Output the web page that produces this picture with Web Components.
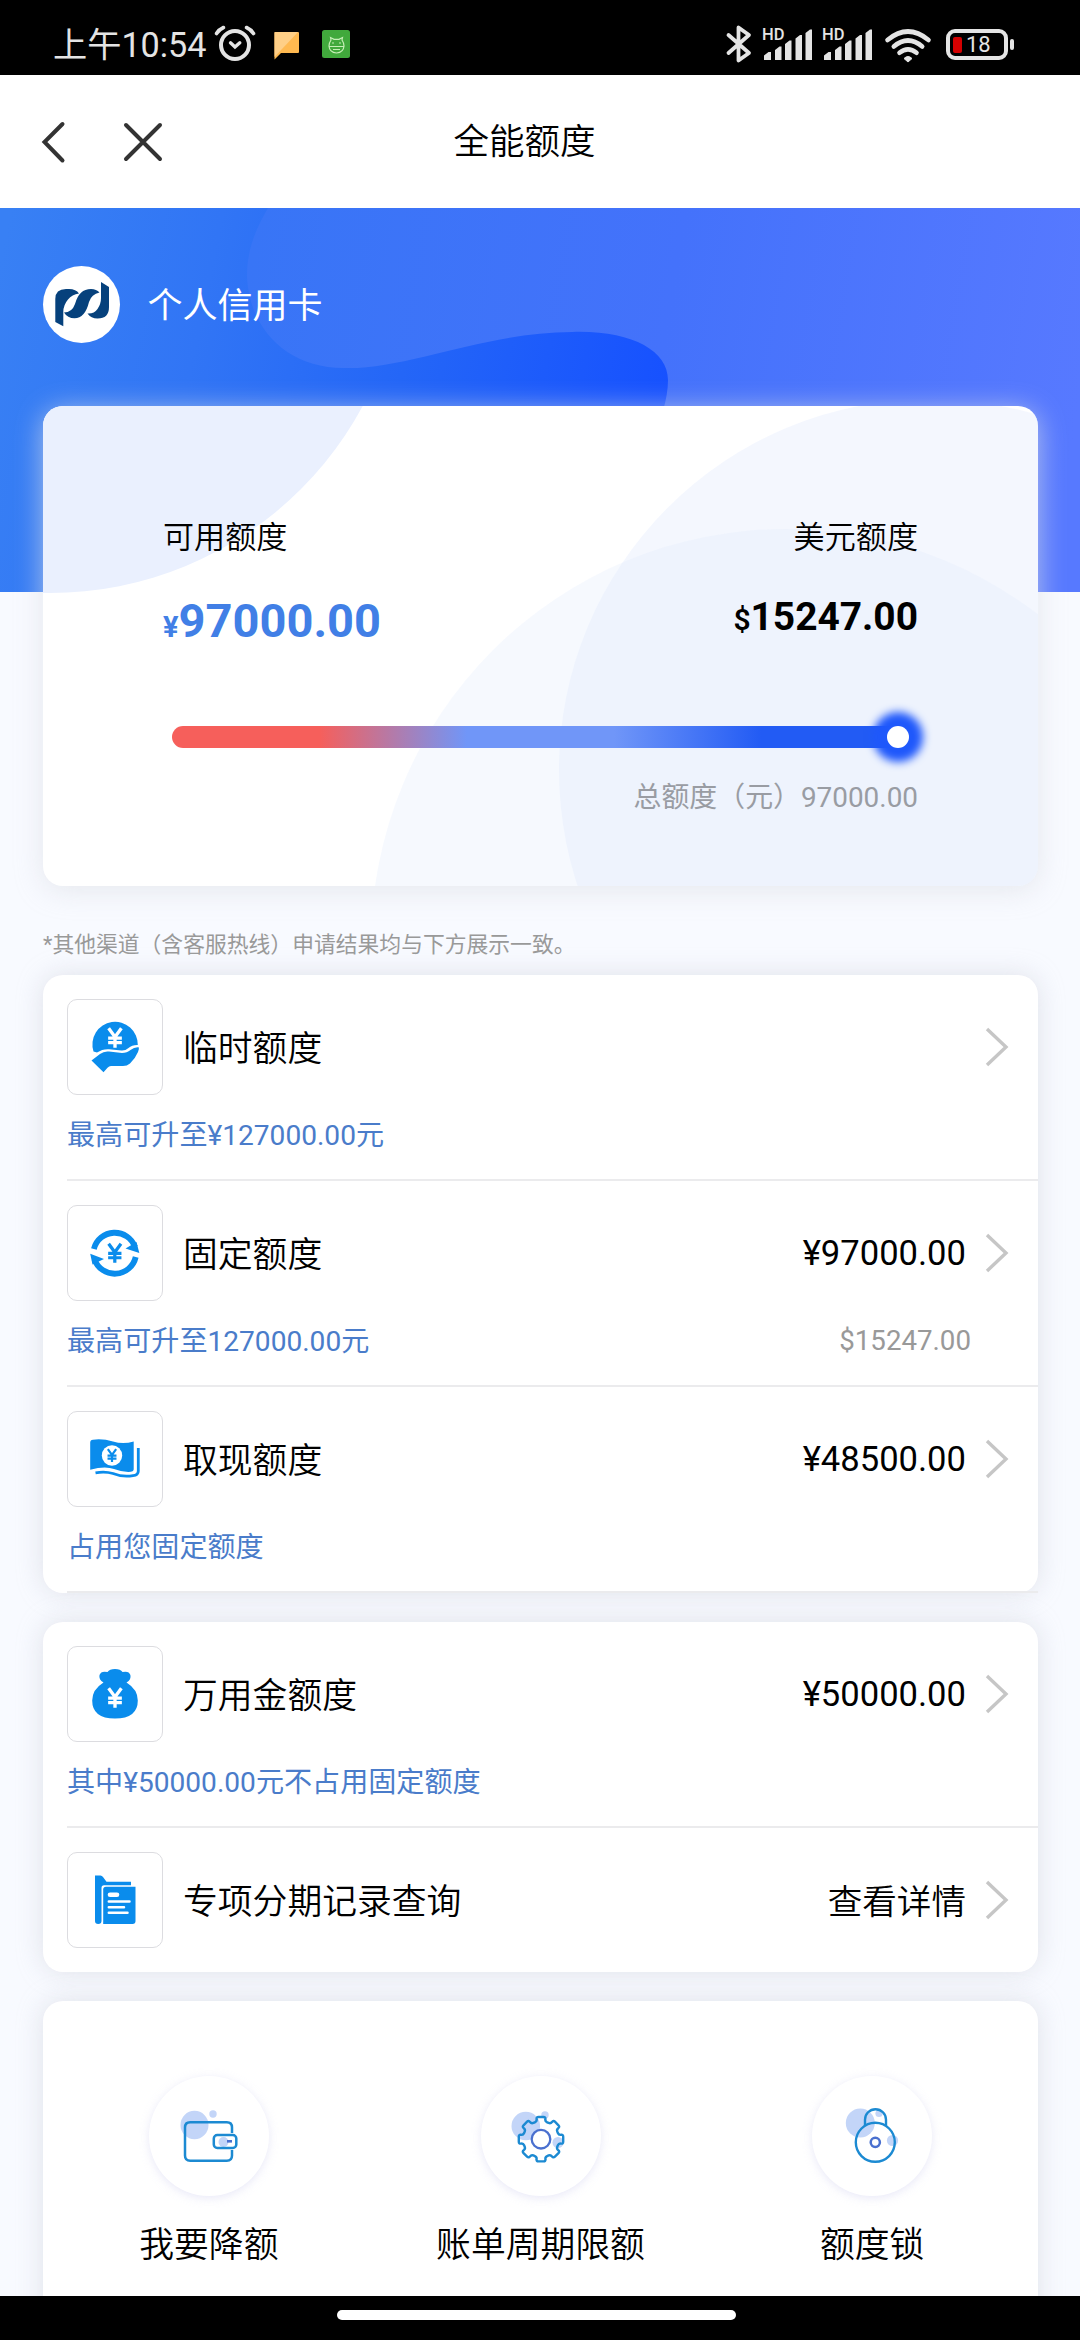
<!DOCTYPE html>
<html lang="zh-CN">
<head>
<meta charset="utf-8">
<title>全能额度</title>
<style>
  html, body { margin: 0; padding: 0; }
  body {
    width: 1080px; height: 2340px; overflow: hidden; background: #f8faff; color: #000;
    font-family: Roboto, "Noto Sans CJK SC", sans-serif; font-size: 34.8px; font-weight: 400;
  }
</style>
</head>
<body>
<app-screen></app-screen>
<script>
const define = (name, html, setup) => {
  const tpl = document.createElement('template');
  tpl.innerHTML = html;
  customElements.define(name, class extends HTMLElement {
    constructor() {
      super();
      this.attachShadow({ mode: 'open' }).appendChild(tpl.content.cloneNode(true));
    }
    connectedCallback() { if (setup) setup(this, this.shadowRoot); }
  });
};

/* Yen mark used inside the row icons, centred on x,y */
const yen = (x, y, s, color) =>
  `<g transform="translate(${x} ${y}) scale(${s})" fill="none" stroke="${color}" stroke-width="3.4">
    <path d="M-6.5-10 0-1 6.5-10M0-1V10M-7 .2H7M-7 4.8H7"/></g>`;

/* Outline of an eight-toothed gear with rounded corners */
const gearPath = (cx, cy, ro, ri) => {
  const pts = [];
  for (let i = 0; i < 8; i++) {
    const a = i * 45 - 90;
    [[-13, ri], [-12, ro], [12, ro], [13, ri]].forEach(([d, r]) => {
      const t = (a + d) * Math.PI / 180;
      pts.push([cx + r * Math.cos(t), cy + r * Math.sin(t)]);
    });
  }
  const towards = (p, q, k) => {
    const l = Math.hypot(q[0] - p[0], q[1] - p[1]);
    return [p[0] + (q[0] - p[0]) * k / l, p[1] + (q[1] - p[1]) * k / l];
  };
  let d = '';
  pts.forEach((p, i) => {
    const a = towards(p, pts[(i + 31) % 32], 2.2), b = towards(p, pts[(i + 1) % 32], 2.2);
    d += `${i ? 'L' : 'M'}${a.map(n => n.toFixed(2))}Q${p.map(n => n.toFixed(2))} ${b.map(n => n.toFixed(2))}`;
  });
  return d + 'Z';
};

const B = '#0a8cec', L = '#1c8ad2', P = '#4a70cf', S = '#c3d5f8';
const icons = {
  hand: [96, 96, `<path d="M26.500 52.500A22.700 22.700 0 1 1 70.800 46Q65 45.800 61.500 49Q58.500 51.800 54.500 51.600L42 50.200Q35.500 49.800 30 53.500Z" fill="${B}"/>
    <path d="M24.500 61.500 33 55Q37 52 42 52.600L55 54Q60 54 63.500 51Q67.500 47.700 71.700 48.200Q72.500 50 71 53Q68 60 63 64.500Q60 67 56 67H44Q42 67 40.500 68.800L36.500 73.300Z" fill="${B}"/>
    ${yen(48, 39, .98, '#fff')}`],
  cycle: [96, 96, `<g fill="none" stroke="${B}" stroke-width="5.800">
      <path d="M26.900 44A21.500 21.500 0 0 1 68 42"/><path d="M68.700 52A21.500 21.500 0 0 1 27.500 54.500"/></g>
    <path d="M69.500 37 72.300 48 58.500 43.500ZM25.500 59.500 23.200 48.800 37 54Z" fill="${B}"/>${yen(47.8, 48.2, .95, B)}`],
  cash: [96, 96, `<path d="M23.200 31.500Q23.200 29 26 28.700Q36 27.500 46 30.500T66.700 30.500V58.500Q66.700 60.500 64 60.800Q56 61.500 47 58T23.200 58.800Z" fill="${B}"/>
    <circle cx="45" cy="44.500" r="10.200" fill="#fff"/>${yen(45, 44.5, .64, B)}
    <path d="M71.300 37V60Q71.300 64.300 66 64.600Q56 66.500 46 62.500Q38 60 28.500 61.800" fill="none" stroke="${B}" stroke-width="2.800"/>`],
  bag: [96, 96, `<path d="M36.500 36.500Q31.500 33.500 32.500 29Q34 24.500 40.500 26Q42.500 23 48 23Q53.500 23 55.500 26Q62 24.500 63.400 29Q64.500 33.500 59.500 36.500Q70.800 43.500 70.800 54.500Q70.800 72.500 48 72.500Q25.200 72.500 25.200 54.500Q25.200 43.500 36.500 36.500Z" fill="${B}"/>${yen(48, 52, .98, '#fff')}`],
  doc: [96, 96, `<path d="M28 23.500H33.500Q35 23.500 36 25L39.500 29.800H64V33.300H37Q34.500 33.300 34.500 36V69Q34.500 72 31.200 72Q28 72 28 69Z" fill="${B}"/>
    <path d="M39 34.800H68.500V69Q68.500 72 65.500 72H36.200V37.500Q36.200 34.800 39 34.800Z" fill="${B}"/>
    <path d="M43 42.700H50" stroke="#fff" stroke-width="4.600" stroke-linecap="round"/>
    <path d="M41.800 49.500H62.500M41.800 55.200H57M41.800 60.800H60.500" stroke="#fff" stroke-width="2.500" stroke-linecap="round"/>`],
  wallet: [120, 120, `<ellipse cx="45.500" cy="49" rx="14" ry="14.300" fill="${S}"/><circle cx="64" cy="38" r="3.700" fill="${S}"/><circle cx="74.500" cy="66" r="5" fill="${S}"/>
    <g fill="none" stroke="${L}" stroke-width="2.500"><path d="M83 57V51.500Q83 46.300 77.800 46.300H41.200Q36 46.300 36 51.500V79.500Q36 84.700 41.200 84.700H77.800Q83 84.700 83 79.500V74"/><rect x="64.800" y="59" width="22.500" height="13" rx="3.500"/></g>
    <path d="M78 65.300H83" stroke="${P}" stroke-width="2.600"/>`],
  gear: [120, 120, `<circle cx="44.800" cy="50" r="14.300" fill="${S}"/><circle cx="64" cy="39" r="3.700" fill="${S}"/><circle cx="77" cy="66.500" r="5.500" fill="${S}"/>
    <path d="${gearPath(60, 63.2, 22.7, 18.2)}" fill="none" stroke="${L}" stroke-width="2.400"/>
    <circle cx="60" cy="63.200" r="9.300" fill="#fff" stroke="${P}" stroke-width="2.300"/>`],
  lock: [120, 120, `<circle cx="48.300" cy="47" r="14.500" fill="${S}"/><circle cx="80.500" cy="64.500" r="5.600" fill="${S}"/><circle cx="67" cy="37.500" r="3.600" fill="${S}"/>
    <g fill="none" stroke="${L}" stroke-width="2.400"><circle cx="63.300" cy="66.300" r="19.500"/><path d="M53 49.500V43.700A10.500 10.500 0 0 1 74 43.700V49.500"/></g>
    <circle cx="63.300" cy="66.300" r="4.600" fill="#fff" stroke="${P}" stroke-width="2.500"/>`],
  alarm: [42, 38, `<g fill="none" stroke="#e4e4e4" stroke-linecap="round"><circle cx="21" cy="20" r="14" stroke-width="4"/><path d="M2.500 8.500Q5 4.500 9.500 2.500M39.500 8.500Q37 4.500 32.500 2.500" stroke-width="3.600"/><path d="M16.500 17.800 21 22 25.800 17.800" stroke-width="3.400"/></g>`],
  bubble: [26, 28, `<path d="M1 0H24Q25 0 25 1V20Q25 21 24 21H7L.5 27.500V1Q.5 0 1 0Z" fill="#ffb950"/><path d="M1 0H24L.5 25V1Q.5 0 1 0Z" fill="#ffcf86"/>`],
  robot: [28, 28, `<rect width="28" height="28" rx="2.500" fill="#41a93c"/><g fill="none" stroke="#c6eeb6" stroke-width="1.200"><path d="M8.500 7.500 9 10Q7 13 7 16Q7.500 22.500 14.500 23Q21.500 22.500 22 16Q22 13 20 10L20.500 7.500 17 9.300H12ZM7 16.500H22"/><path d="M10 13H12M17 13H19M11 19.500H18"/></g>`],
  bluetooth: [26, 38, `<path d="M2.500 10 23 28 12.500 35.500V2.500L23 10 2.500 28" fill="none" stroke="#e4e4e4" stroke-width="3.800" stroke-linejoin="round" stroke-linecap="round"/>`],
  bars: [50, 32, `<g fill="#e4e4e4"><path d="M0 31V26.500L4.500 23H7V31ZM11 31V21L15.500 17.500H17.500V31ZM21 31V15L25.500 11.500H27.500V31ZM31.500 31V9.500L36 6H38V31ZM41.500 31V4L46 .5H48V31Z"/></g>`],
  wifi: [48, 36, `<g fill="none" stroke="#e4e4e4" stroke-width="4.600" stroke-linecap="round"><path d="M3.500 13Q24-4 44.500 13"/><path d="M9.800 19.500Q24 7.500 38.200 19.500"/><path d="M15.500 25.800Q24 19 32.500 25.800"/></g><path d="M20 31.500Q24 27.500 28 31.500L24 35Z" fill="#e4e4e4" stroke="#e4e4e4" stroke-width="1" stroke-linejoin="round"/>`],
  back: [24, 42, `<path d="M20.500 3 2.500 21 20.500 39.500" fill="none" stroke="#333" stroke-width="4" stroke-linecap="round"/>`],
  close: [40, 40, `<path d="M3 3 37 37M37 3 3 37" stroke="#333" stroke-width="4" stroke-linecap="round"/>`],
  chevron: [24, 40, `<path d="M2 2 21 20 2 38" fill="none" stroke="#c6c6c6" stroke-width="3.400"/>`],
  logo: [77, 77, `<g fill="#06417c"><path d="M12.300 56V33Q12.300 23 23 23H26Q33 23 36 27.500Q29 28.500 25 33.500Q20.300 39 20.300 46V60.200Z"/><path d="M21 46.500Q29 46.500 32 38Q36 23 48 23Q53.500 23 56.500 26.500Q48.500 28 46 36Q42 52.300 31.500 52.300Q24.500 52.300 21 46.500Z"/><path d="M58 16 66 21V41Q66 52.500 54.500 52.500Q48 52.500 44.500 47.500Q51 48 54.500 43Q58 38 58 32Z"/></g>`],
};

define('ui-icon', `<style>:host{display:block;flex:none}svg{display:block;overflow:visible}</style>`, (el, root) => {
  if (root.querySelector('svg')) return;
  const [w, h, body] = icons[el.getAttribute('name')];
  root.innerHTML += `<svg width="${w}" height="${h}" viewBox="0 0 ${w} ${h}">${body}</svg>`;
});

define('status-bar', `
<style>
  :host{display:flex;justify-content:space-between;box-sizing:border-box;height:75px;background:#000;color:#e4e4e4;padding:0 66px 0 53px}
  .side{display:flex;align-items:flex-start}
  .time{font-size:34.2px;line-height:40px;margin-top:25px;width:161px;white-space:nowrap}
  .sig{display:grid;width:60px;margin-top:29px}
  .sig>*{grid-area:1/1}
  .hd{font-size:16.5px;font-weight:500;line-height:16px;margin:-2px 0 0 -2px}
  .bat{display:grid;box-sizing:border-box;width:62px;height:31px;border:4px solid #e4e4e4;border-radius:9px;margin-top:29px;
    grid-template-columns:auto 1fr;align-items:center}
  .bat i{width:9px;height:16px;border-radius:2px;background:#d40000;margin-left:3px}
  .bat span{font-size:22px;font-weight:400;line-height:22px;margin-left:4px}
  .nub{width:4px;height:11px;border-radius:2px;background:#e4e4e4;margin:39px 0 0 2px}
</style>
<div class="side"><span class="time">上午10:54</span>
  <ui-icon name="alarm" style="margin-top:25px"></ui-icon>
  <ui-icon name="bubble" style="margin:32px 0 0 18px"></ui-icon>
  <ui-icon name="robot" style="margin:30px 0 0 22px"></ui-icon></div>
<div class="side">
  <ui-icon name="bluetooth" style="margin:25px 12px 0 0"></ui-icon>
  <div class="sig"><ui-icon name="bars"></ui-icon><span class="hd">HD</span></div>
  <div class="sig"><ui-icon name="bars"></ui-icon><span class="hd">HD</span></div>
  <ui-icon name="wifi" style="margin:27px 14px 0 0"></ui-icon>
  <div class="bat"><i></i><span>18</span></div><div class="nub"></div>
</div>`);

define('nav-bar', `
<style>
  :host{display:grid;grid-template-columns:453.5px 1fr;align-items:center;height:133px;background:#fff}
  .btns{display:flex;align-items:center;gap:57px;padding-left:42px}
  .title{font-size:35.5px;font-weight:350;line-height:50px;padding-top:1px}
</style>
<div class="btns"><ui-icon name="back"></ui-icon><ui-icon name="close"></ui-icon></div>
<div class="title"><slot></slot></div>`);

define('quota-meter', `
<style>
  :host{display:flex;justify-content:flex-end;align-items:center;box-sizing:border-box;width:737px;height:22px;border-radius:11px;
    background:linear-gradient(90deg,#f65f5b 20%,#7096f8 40%,#7096f8 60%,#225bf4 80%)}
  .knob{width:22px;height:22px;border-radius:50%;background:#fff;box-shadow:0 0 8px 14px #1f58fb}
</style><div class="knob"></div>`);

define('quota-card', `
<style>
  :host{display:grid;width:995px;height:480px;border-radius:20px;background:#fff;box-shadow:0 4px 28px rgba(222,224,230,.72)}
  svg{grid-area:1/1;border-radius:20px;display:block}
  .body{grid-area:1/1;box-sizing:border-box;padding:110px 120px 0 120px;display:flex;flex-direction:column}
  .pair{display:flex;justify-content:space-between}
  .label{font-size:31.1px;font-weight:350;line-height:44px;margin-bottom:25px}
  .r{text-align:right}
  .num{font-weight:700;line-height:56px}
  .cny{font-size:47px;color:#417fe6;padding-top:8px}
  .cny small{font-size:29px}
  .usd{font-size:38.9px;padding-top:4px}
  .usd small{font-size:30px;font-weight:600}
  quota-meter{margin:71px 0 0 9px}
  .total{font-size:27.9px;line-height:40px;color:#999ca3;text-align:right;margin-top:30px}
</style>
<svg width="995" height="480" viewBox="43 406 995 480">
  <circle cx="50" cy="238" r="355" fill="#eaf0fe"/>
  <circle cx="930" cy="770" r="371" fill="#e2ebfc" fill-opacity=".38"/>
  <circle cx="786" cy="944" r="415" fill="#e2eafc" fill-opacity=".3"/>
</svg>
<div class="body">
  <div class="pair">
    <div><div class="label">可用额度</div><div class="num cny"><small>¥</small>97000.00</div></div>
    <div class="r"><div class="label">美元额度</div><div class="num usd"><small>$</small>15247.00</div></div>
  </div>
  <quota-meter></quota-meter>
  <div class="total">总额度（元）97000.00</div>
</div>`);

define('hero-panel', `
<style>
  :host{display:grid;height:678px}
  svg{grid-area:1/1;display:block}
  .body{grid-area:1/1;display:flex;flex-direction:column;padding:58px 0 0 43px}
  .who{display:flex;align-items:center;height:77px;margin-bottom:63px}
  .disc{width:77px;height:77px;border-radius:50%;background:#fff}
  .name{color:#fff;font-size:35px;line-height:50px;margin:5px 0 0 27.5px}
</style>
<svg width="1080" height="384" viewBox="0 208 1080 384">
  <defs>
    <linearGradient id="a" gradientUnits="userSpaceOnUse" x1="0" y1="260" x2="680" y2="400"><stop offset="0" stop-color="#3880f4"/><stop offset=".3" stop-color="#3175f5"/><stop offset=".6" stop-color="#2466f7"/><stop offset="1" stop-color="#1650ff"/></linearGradient>
    <linearGradient id="b" gradientUnits="userSpaceOnUse" x1="250" y1="260" x2="1080" y2="400"><stop offset="0" stop-color="#3875f6"/><stop offset=".5" stop-color="#4472fb"/><stop offset="1" stop-color="#5779ff"/></linearGradient>
  </defs>
  <rect y="208" width="1080" height="384" fill="url(#a)"/>
  <path d="M268 208C254 232 247 252 247 276C249 328 286 368 344 368C406 370 486 332 572 332C630 330 668 350 668 380C668 440 600 500 640 592H1080V208Z" fill="url(#b)"/>
</svg>
<div class="body">
  <div class="who"><div class="disc"><ui-icon name="logo"></ui-icon></div><div class="name">个人信用卡</div></div>
  <quota-card></quota-card>
</div>`);

define('panel-card', `
<style>
  :host{display:block;width:995px;border-radius:20px;background:#fff;box-shadow:0 0 26px rgba(215,218,226,.75)}
</style><slot></slot>`);

define('limit-row', `
<style>
  :host{display:block;box-sizing:border-box;margin-left:24px;padding-top:24px;height:206px;border-bottom:2px solid #ebebed}
  :host([plain]){height:144px;border:0}
  .main{display:flex;align-items:center;height:96px}
  .box{box-sizing:border-box;width:96px;height:96px;border:1.500px solid #dcdce0;border-radius:10px;margin-right:20px}
  .box ui-icon{margin:-1px}
  .name{flex:1;font-weight:350;line-height:50px;padding-top:4px}
  .val{font-size:34.6px;line-height:50px;margin-right:19px}
  .val.cn{font-weight:350;padding-top:4px}
  ui-icon.chev{margin-right:29px}
  .sub{display:flex;justify-content:space-between;font-size:28.1px;line-height:40px;margin-top:21px;padding-right:67px;color:#4a7cca}
  .sub .usd{color:#999;font-size:27.7px;margin-top:-1px}
</style>
<div class="main"><div class="box"></div><div class="name"></div><div class="val"></div><ui-icon class="chev" name="chevron"></ui-icon></div>
<div class="sub"><span class="tip"></span><span class="usd"></span></div>`, (el, root) => {
  const g = n => el.getAttribute(n) || '';
  root.querySelector('.box').innerHTML = `<ui-icon name="${g('icon')}"></ui-icon>`;
  root.querySelector('.name').textContent = g('name');
  const val = root.querySelector('.val');
  val.textContent = g('value');
  if (el.hasAttribute('plain')) val.classList.add('cn');
  root.querySelector('.tip').textContent = g('tip');
  root.querySelector('.usd').textContent = g('usd');
});

define('quick-action', `
<style>
  :host{display:flex;flex-direction:column;align-items:center;flex:1}
  .disc{width:120px;height:120px;border-radius:50%;background:#fff;box-shadow:0 2px 10px rgba(200,200,235,.42)}
  .label{font-weight:350;line-height:50px;margin-top:24px}
</style>
<div class="disc"></div><div class="label"><slot></slot></div>`, (el, root) => {
  root.querySelector('.disc').innerHTML = `<ui-icon name="${el.getAttribute('icon')}"></ui-icon>`;
});

define('app-screen', `
<style>
  :host{display:flex;flex-direction:column;width:1080px;height:2340px;overflow:hidden}
  main{flex:1;min-height:0;overflow:hidden;display:flex;flex-direction:column}
  main>*{flex:none}
  panel-card{margin-left:43px}
  .note{font-size:21.8px;line-height:30px;color:#999;margin:44px 0 15px 43px}
  .actions{display:flex;padding-top:75px;height:260px}
  footer{height:44px;background:#000;display:flex;justify-content:center;padding-right:7px}
  footer i{width:399px;height:10px;margin-top:14px;border-radius:5px;background:#fff}
</style>
<status-bar></status-bar>
<nav-bar>全能额度</nav-bar>
<main>
  <hero-panel></hero-panel>
  <div class="note">*其他渠道（含客服热线）申请结果均与下方展示一致。</div>
  <panel-card>
    <limit-row icon="hand" name="临时额度" tip="最高可升至¥127000.00元"></limit-row>
    <limit-row icon="cycle" name="固定额度" value="¥97000.00" tip="最高可升至127000.00元" usd="$15247.00"></limit-row>
    <limit-row icon="cash" name="取现额度" value="¥48500.00" tip="占用您固定额度"></limit-row>
  </panel-card>
  <panel-card style="margin-top:29px">
    <limit-row icon="bag" name="万用金额度" value="¥50000.00" tip="其中¥50000.00元不占用固定额度"></limit-row>
    <limit-row plain icon="doc" name="专项分期记录查询" value="查看详情"></limit-row>
  </panel-card>
  <panel-card style="margin-top:29px">
    <div class="actions">
      <quick-action icon="wallet">我要降额</quick-action>
      <quick-action icon="gear">账单周期限额</quick-action>
      <quick-action icon="lock">额度锁</quick-action>
    </div>
  </panel-card>
</main>
<footer><i></i></footer>`);
</script>
</body>
</html>
